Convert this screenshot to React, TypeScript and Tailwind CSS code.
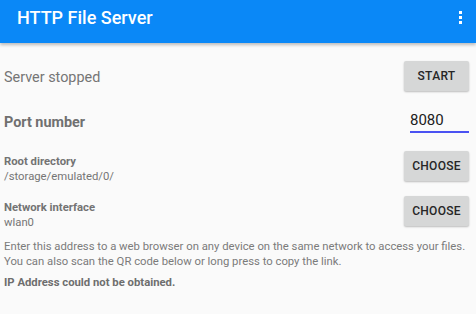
import { useState } from "react";

function SmallButton({ label }: { label: string }) {
  return (
    <button className="flex h-[30px] w-[65px] shrink-0 items-center justify-center rounded-[2px] bg-[#d6d7d7] text-[12px] font-medium tracking-[0.3px] text-[#262626] shadow-[0_1px_2px_rgba(0,0,0,0.25)]">
      {label}
    </button>
  );
}

export default function App() {
  const [port, setPort] = useState("8080");

  return (
    <main className="h-[314px] w-[476px] overflow-hidden bg-[#fafafa] font-['Roboto',sans-serif]">
      {/* TOOLBAR */}
      <header className="flex h-[43px] items-start justify-between bg-[#0a88f7] pl-[17px] pr-[14px] shadow-[0_2px_3px_rgba(0,0,0,0.25)]">
        <h1 className="mt-[6px] text-[18px] font-medium leading-[24px] text-white">
          HTTP File Server
        </h1>
        <div className="mt-[11px] flex flex-col gap-[2px]">
          <span className="block h-[3px] w-[3px] bg-white" />
          <span className="block h-[3px] w-[3px] bg-white" />
          <span className="block h-[3px] w-[3px] bg-white" />
        </div>
      </header>

      <section className="pl-[4px] pr-[7px]">
        {/* SERVER STATUS */}
        <div className="mt-[18px] flex h-[30px] items-center justify-between">
          <p className="mt-[3px] text-[14.4px] leading-[20px] text-[#757575]">Server stopped</p>
          <SmallButton label="START" />
        </div>

        {/* PORT */}
        <div className="mt-[19px] flex items-start justify-between">
          <p className="mt-[3px] text-[14.4px] font-bold leading-[20px] text-[#707070]">Port number</p>
          <input
            value={port}
            onChange={(e) => setPort(e.target.value)}
            className="w-[59px] border-b-2 border-[#4a52f2] bg-transparent pb-[1px] text-[15px] leading-[20px] text-[#212121] outline-none"
          />
        </div>

        {/* ROOT DIRECTORY */}
        <div className="mt-[18px] flex items-start justify-between">
          <div className="mt-[3px] text-[11.3px] leading-[15px]">
            <p className="font-bold text-[#737373]">Root directory</p>
            <p className="text-[#757575]">/storage/emulated/0/</p>
          </div>
          <SmallButton label="CHOOSE" />
        </div>

        {/* NETWORK INTERFACE */}
        <div className="mt-[12px] flex items-start justify-between">
          <div className="mt-[4px] text-[11.3px] leading-[15px]">
            <p className="font-bold text-[#737373]">Network interface</p>
            <p className="text-[#757575]">wlan0</p>
          </div>
          <SmallButton label="CHOOSE" />
        </div>

        {/* ADDRESS INFO */}
        <p className="mt-[9px] whitespace-nowrap text-[11.3px] leading-[15px] text-[#7b7b7b]">
          Enter this address to a web browser on any device on the same network to access your files.
          <br />
          You can also scan the QR code below or long press to copy the link.
        </p>
        <p className="mt-[7px] text-[11.3px] font-bold leading-[14px] text-[#6e6e6e]">
          IP Address could not be obtained.
        </p>
      </section>
    </main>
  );
}
